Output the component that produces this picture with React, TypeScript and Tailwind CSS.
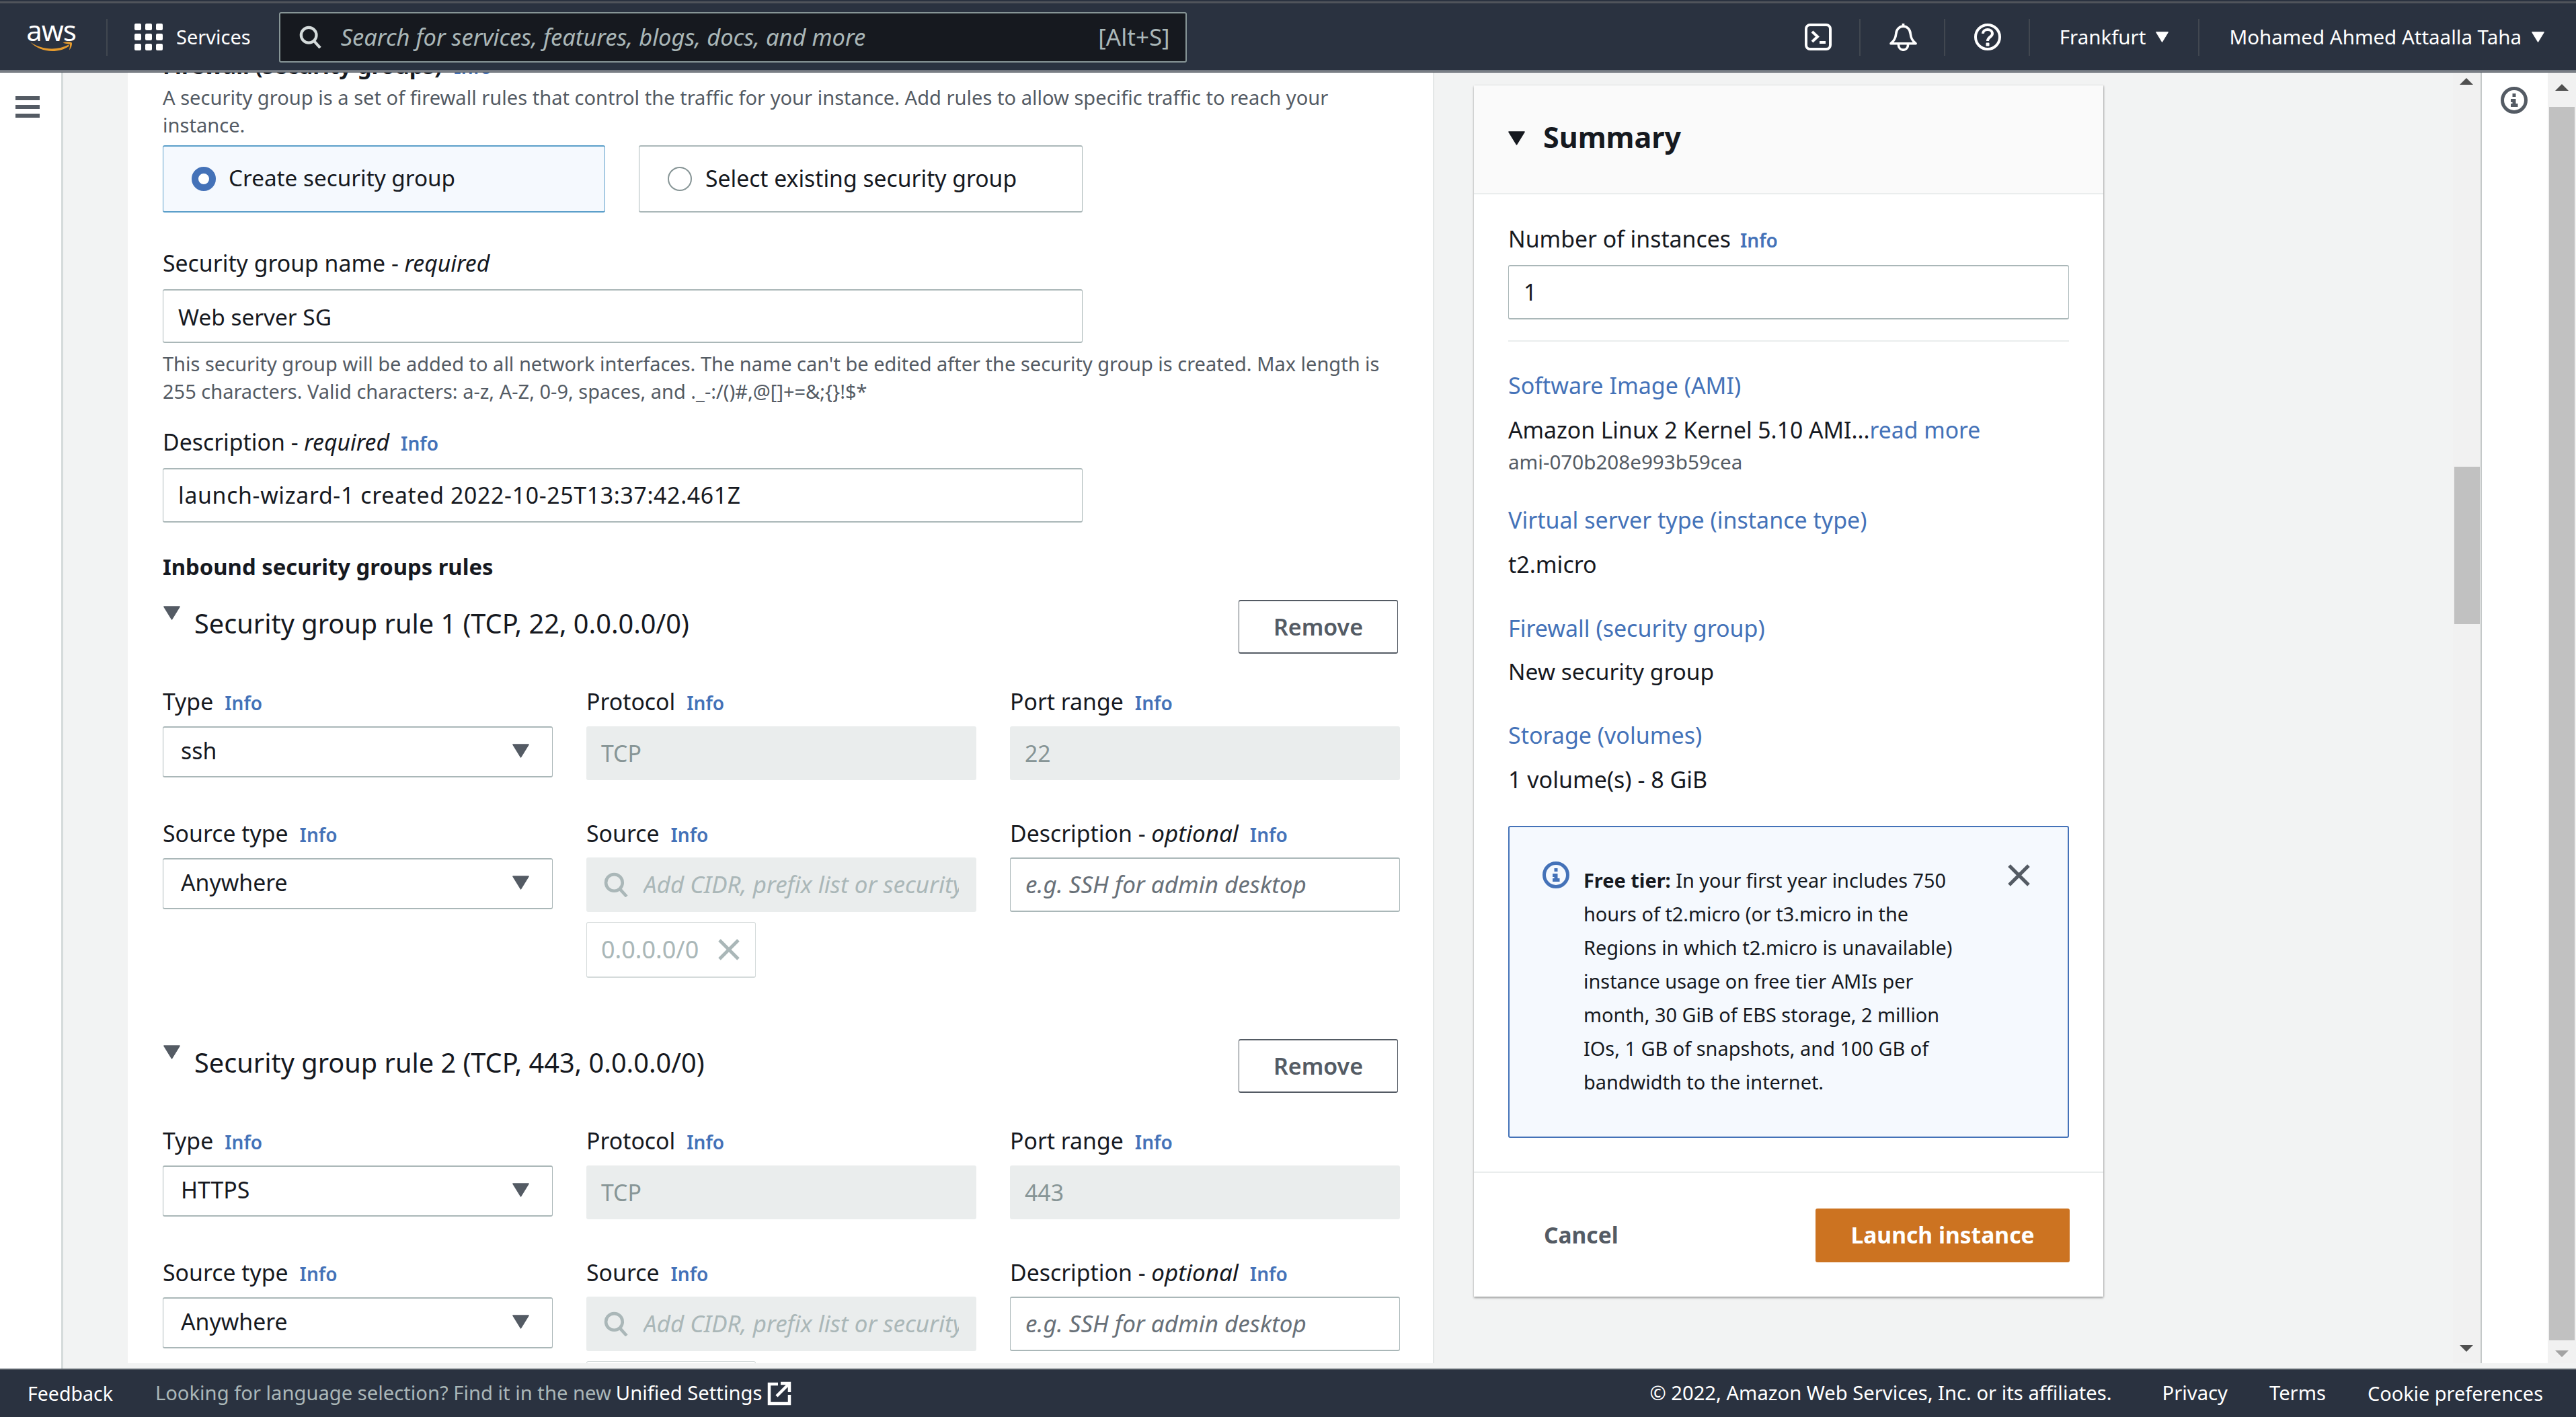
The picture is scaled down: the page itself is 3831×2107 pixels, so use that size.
import React from "react";

const FONT = "font-['Noto_Sans','Open_Sans',sans-serif]";

function Caret({ className = "" }: { className?: string }) {
  return (
    <svg viewBox="0 0 24 20" className={className} fill="currentColor">
      <path d="M1 1 H23 L12 19 Z" stroke="currentColor" strokeWidth="1.5" strokeLinejoin="round" />
    </svg>
  );
}

function Search({ className = "" }: { className?: string }) {
  return (
    <svg viewBox="0 0 36 36" className={className} fill="none" stroke="currentColor" strokeWidth="4.5">
      <circle cx="15" cy="15" r="12" />
      <path d="M23 24 L33 35" />
    </svg>
  );
}

function CloseX({ className = "" }: { className?: string }) {
  return (
    <svg viewBox="0 0 32 32" className={className} fill="none" stroke="currentColor" strokeWidth="5">
      <path d="M2 2 L30 30 M30 2 L2 30" />
    </svg>
  );
}

function InfoIcon({ className = "" }: { className?: string }) {
  return (
    <svg viewBox="0 0 40 40" className={className} fill="none">
      <circle cx="20" cy="20" r="17.5" stroke="currentColor" strokeWidth="5" />
      <path d="M17.5 10 h5 v5 h-5 Z M15 18 h7.5 v7 h3 v5 H15 v-5 h2.5 v-2 H15 Z" fill="currentColor" />
    </svg>
  );
}

function Info({ className = "ml-[17px]" }: { className?: string }) {
  return <span className={`text-[28px] font-semibold text-[#4472b8] ${className}`}>Info</span>;
}

function Label({ children }: { children: React.ReactNode }) {
  return <div className="h-[46px] leading-[46px] text-[33.8px] text-[#16191f] whitespace-nowrap">{children}</div>;
}

function Select({ value }: { value: string }) {
  return (
    <div className="mt-[14px] h-[76px] flex items-center pl-[26px] pr-[33px] bg-white rounded-[3px] border border-[#aab7b8] border-t-[2px] border-b-[2px] text-[33.8px] text-[#16191f]">
      <span className="-mt-[3px]">{value}</span>
      <Caret className="ml-auto w-[27px] h-[21px] text-[#545b64] -mt-[4px]" />
    </div>
  );
}

function DisabledInput({ value }: { value: string }) {
  return (
    <div className="mt-[14px] h-[80px] flex items-center pl-[22px] bg-[#eaeded] rounded-[3px] text-[33.8px] text-[#879596]">
      {value}
    </div>
  );
}

function DescInput() {
  return (
    <div className="mt-[13px] h-[81px] flex items-center pl-[22px] bg-white rounded-[3px] border border-[#aab7b8] border-t-[2px] border-b-[2px] text-[35px] italic text-[#687078] whitespace-nowrap overflow-hidden">
      e.g. SSH for admin desktop
    </div>
  );
}

function Rule({ title, type, port, mt, token }: { title: string; type: string; port: string; mt: string; token?: boolean }) {
  return (
    <section className={mt}>
      <div className="flex h-[80px]">
        <Caret className="w-[27px] h-[21px] mt-[9px] text-[#545b64]" />
        <div className="ml-[20px] mt-[12px] h-[46px] leading-[46px] text-[39.7px] text-[#16191f] whitespace-nowrap">{title}</div>
        <div className="ml-auto mr-[3px] w-[237px] h-[80px] flex items-center justify-center rounded-[3px] bg-white border border-[#545b64] border-t-[2px] border-b-[2px] text-[34px] font-semibold text-[#545b64]">
          Remove
        </div>
      </div>
      <div className="mt-[48px] grid grid-cols-[580px_580px_580px] gap-x-[50px]">
        <div>
          <Label>Type<Info /></Label>
          <Select value={type} />
        </div>
        <div>
          <Label>Protocol<Info /></Label>
          <DisabledInput value="TCP" />
        </div>
        <div>
          <Label>Port range<Info /></Label>
          <DisabledInput value={port} />
        </div>
      </div>
      <div className="mt-[56px] grid grid-cols-[580px_580px_580px] gap-x-[50px] items-start">
        <div>
          <Label>Source type<Info /></Label>
          <Select value="Anywhere" />
        </div>
        <div>
          <Label>Source<Info /></Label>
          <div className="mt-[13px] h-[81px] flex items-center pl-[26px] pr-[26px] bg-[#eaeded] rounded-[3px] text-[35px] italic text-[#aab7b8] whitespace-nowrap overflow-hidden">
            <Search className="w-[37px] h-[37px] mr-[22px] shrink-0" />
            <span className="min-w-0 overflow-hidden">Add CIDR, prefix list or security group</span>
          </div>
          <div className="mt-[15px] w-[252px] h-[83px] flex items-center pl-[21px] bg-white rounded-[3px] border border-[#d5dbdb] border-b-[2px] text-[36px] text-[#aab7b8]">
            {token && "0.0.0.0/0"}
            {token && <CloseX className="ml-[29px] w-[32px] h-[32px]" />}
          </div>
        </div>
        <div>
          <Label>Description - <i className="text-[35px]">optional</i><Info /></Label>
          <DescInput />
        </div>
      </div>
    </section>
  );
}

function SideLink({ children, mt }: { children: React.ReactNode; mt: string }) {
  return <div className={`${mt} h-[46px] leading-[46px] text-[34px] text-[#4472b8] whitespace-nowrap`}>{children}</div>;
}

function SideValue({ children, mt, size = "text-[34px]" }: { children: React.ReactNode; mt: string; size?: string }) {
  return <div className={`${mt} h-[46px] leading-[46px] ${size} text-[#16191f] whitespace-nowrap`}>{children}</div>;
}

function Divider() {
  return <div className="w-[2px] h-[55px] bg-[#414750]" />;
}

function Arrow({ up, className }: { up?: boolean; className: string }) {
  return (
    <svg viewBox="0 0 20 10" className={className} fill="currentColor">
      <path d={up ? "M10 0 L20 10 H0 Z" : "M0 0 H20 L10 10 Z"} />
    </svg>
  );
}

export default function App() {
  return (
    <div className={`${FONT} w-[3831px] h-[2107px] flex flex-col overflow-hidden bg-[#f2f3f3]`}>
      {/* Top navigation */}
      <header className="h-[108px] shrink-0 flex flex-col bg-[#2a3240] text-white">
        <div className="h-[2px] bg-[#2a3240]" />
        <div className="h-[3px] bg-[#50545b]" />
        <div className="flex-1 min-h-0 flex items-center">
          <div className="ml-[36px] w-[80px] h-[52px] flex flex-col items-center -mt-[2px]">
            <span className="text-[42px] leading-[34px] tracking-[-1px] text-white">aws</span>
            <svg viewBox="0 0 80 24" className="w-[78px] h-[22px] -mt-[1px] text-[#e59b2e]" fill="currentColor">
              <path d="M1 2 C20 16 50 19 73 7 L74 9.5 C52 25 18 21 1 2 Z" />
              <path d="M62 3 C68 1 76 1 79 3 C80 8 77 14 74 17 C75 12 76 8 75 6 C72 5 67 5 62 3 Z" />
            </svg>
          </div>
          <div className="ml-[42px] w-[2px] h-[55px] bg-[#414750]" />
          <svg viewBox="0 0 42 40" className="ml-[40px] w-[42px] h-[40px]" fill="currentColor">
            {[0, 15, 30].map((y) =>
              [0, 16, 32].map((x) => <rect key={`${x}-${y}`} x={x} y={y} width="10" height="10" rx="2" />),
            )}
          </svg>
          <span className="ml-[20px] text-[29px]">Services</span>
          <div className="ml-[42px] w-[1350px] h-[75px] flex items-center bg-[#16191f] rounded-[3px] border-2 border-[#879596] pl-[28px] pr-[23px]">
            <Search className="w-[34px] h-[34px] text-[#d5dbdb]" />
            <span className="ml-[28px] text-[34.5px] italic text-[#aab7b8] whitespace-nowrap">Search for services, features, blogs, docs, and more</span>
            <span className="ml-auto text-[35px] text-[#aab7b8]">[Alt+S]</span>
          </div>
          <div className="ml-auto flex items-center mr-[46px]">
            <svg viewBox="0 0 40 40" className="w-[40px] h-[40px]" fill="none" stroke="currentColor" strokeWidth="4">
              <rect x="2" y="2" width="36" height="36" rx="6" />
              <path d="M11 12 L19 19.5 L11 27 M22 28 H31" />
            </svg>
            <div className="ml-[41px]"><Divider /></div>
            <svg viewBox="0 0 40 40" className="ml-[43px] w-[41px] h-[41px]" fill="none" stroke="currentColor" strokeWidth="3.6">
              <path d="M20 0 V4 M2 29 C8 24 9 20 9.5 15 C10 8 15 4 20 4 C25 4 30 8 30.5 15 C31 20 32 24 38 29 Z M13 30 C13 41 27 41 27 30" strokeLinejoin="round" />
            </svg>
            <div className="ml-[40px]"><Divider /></div>
            <svg viewBox="0 0 40 40" className="ml-[43px] w-[40px] h-[40px]" fill="none" stroke="currentColor" strokeWidth="4">
              <circle cx="20" cy="20" r="18" />
              <path d="M13 15 C13 7 27 7 27 15 C27 20 20 20 20 26" />
              <path d="M18 29 h4 v4 h-4 Z" fill="currentColor" strokeWidth="1" />
            </svg>
            <div className="ml-[41px]"><Divider /></div>
            <span className="ml-[44px] text-[29.5px] whitespace-nowrap">Frankfurt</span>
            <Caret className="ml-[14px] w-[21px] h-[16px]" />
            <div className="ml-[43px]"><Divider /></div>
            <span className="ml-[44px] text-[29.5px] whitespace-nowrap">Mohamed Ahmed Attaalla Taha</span>
            <Caret className="ml-[14px] w-[21px] h-[16px]" />
          </div>
        </div>
        <div className="h-[1px] bg-white" />
        <div className="h-[2px] bg-[#5b616a]" />
      </header>

      {/* Body */}
      <div className="flex-1 min-h-0 flex">
        <aside className="w-[94px] shrink-0 bg-white border-r-[3px] border-[#d5dbdb] pt-[35px] pl-[23px]">
          <div className="w-[36px] flex flex-col gap-[7px]">
            <div className="h-[6px] bg-[#545b64]" />
            <div className="h-[6px] bg-[#545b64]" />
            <div className="h-[6px] bg-[#545b64]" />
          </div>
        </aside>

        <div className="w-[96px] shrink-0" />

        <main className="w-[1943px] h-[1919px] shrink-0 bg-white overflow-hidden border-r-[2px] border-[#e4e7e7] pl-[52px]">
          <div className="-mt-[35px] w-[1840px]">
            <div className="h-[50px] leading-[50px] text-[33px] font-bold text-[#16191f]">
              Firewall (security groups)<Info className="ml-[18px]" />
            </div>
            <p className="mt-[2px] w-[1800px] text-[29.1px] leading-[41px] text-[#545b64]">
              A security group is a set of firewall rules that control the traffic for your instance. Add rules to allow specific traffic to reach your<br />instance.
            </p>
            <div className="mt-[9px] flex gap-[50px]">
              <div className="w-[658px] h-[100px] flex items-center pl-[42px] rounded-[3px] bg-[#f5f9fe] border border-[#5a9ec9] border-t-[2px] border-b-[2px] text-[33.3px] text-[#16191f]">
                <span className="w-[36px] h-[36px] rounded-full border-[10px] border-[#4472b8] bg-white shrink-0" />
                <span className="ml-[19px] -mt-[2px]">Create security group</span>
              </div>
              <div className="w-[660px] h-[100px] flex items-center pl-[42px] rounded-[3px] bg-white border border-[#aab7b8] border-t-[2px] border-b-[2px] text-[33.7px] text-[#16191f]">
                <span className="w-[36px] h-[36px] rounded-full border-[2px] border-[#879596] bg-white shrink-0" />
                <span className="ml-[20px] -mt-[2px]">Select existing security group</span>
              </div>
            </div>

            <div className="mt-[52px]"><Label>Security group name - <i>required</i></Label></div>
            <div className="mt-[16px] w-[1368px] h-[80px] flex items-center pl-[22px] rounded-[3px] bg-white border border-[#aab7b8] border-t-[2px] border-b-[2px] text-[33.4px] text-[#16191f]">
              <span className="mt-[3px]">Web server SG</span>
            </div>
            <p className="mt-[10px] w-[1820px] text-[29px] leading-[41px] text-[#545b64]">
              This security group will be added to all network interfaces. The name can't be edited after the security group is created. Max length is<br />255 characters. Valid characters: a-z, A-Z, 0-9, spaces, and ._-:/()#,@[]+=&amp;;{"{}"}!$*
            </p>

            <div className="mt-[32px]"><Label>Description - <i>required</i><Info /></Label></div>
            <div className="mt-[16px] w-[1368px] h-[81px] flex items-center pl-[22px] rounded-[3px] bg-white border border-[#aab7b8] border-t-[2px] border-b-[2px] text-[33.8px] tracking-[0.67px] text-[#16191f]">
              launch-wizard-1 created 2022-10-25T13:37:42.461Z
            </div>

            <div className="mt-[43px] h-[46px] leading-[46px] text-[32.8px] font-bold text-[#16191f]">Inbound security groups rules</div>

            <Rule mt="mt-[26px]" token title="Security group rule 1 (TCP, 22, 0.0.0.0/0)" type="ssh" port="22" />
            <Rule mt="mt-[91px]" title="Security group rule 2 (TCP, 443, 0.0.0.0/0)" type="HTTPS" port="443" />
          </div>
        </main>

        <div className="w-[59px] shrink-0" />

        {/* Summary card */}
        <div className="w-[936px] h-[1801px] mt-[19px] shrink-0 bg-white shadow-[0_2px_3px_rgba(0,0,0,0.35),1px_0_2px_rgba(0,0,0,0.15)]">
          <div className="h-[162px] bg-[#fafafa] border-b-[2px] border-[#eaeded] flex items-center pl-[50px]">
            <Caret className="w-[27px] h-[21px] text-[#16191f] -mt-[4px]" />
            <span className="ml-[26px] text-[43px] font-bold text-[#16191f] -mt-[6px]">Summary</span>
          </div>
          <div className="px-[51px]">
            <div className="pt-[43px]"><Label>Number of instances<Info className="ml-[14px]" /></Label></div>
            <div className="mt-[16px] h-[81px] flex items-center pl-[22px] rounded-[3px] bg-white border border-[#aab7b8] border-t-[2px] border-b-[2px] text-[33.8px] text-[#16191f]">1</div>
            <div className="mt-[31px] h-[2px] bg-[#eaeded]" />
            <SideLink mt="mt-[42px]">Software Image (AMI)</SideLink>
            <SideValue mt="mt-[20px]" size="text-[33.7px]">Amazon Linux 2 Kernel 5.10 AMI...<span className="text-[#4472b8]">read more</span></SideValue>
            <div className="mt-[7px] h-[36px] leading-[36px] text-[29.6px] text-[#545b64]">ami-070b208e993b59cea</div>
            <SideLink mt="mt-[45px]">Virtual server type (instance type)</SideLink>
            <SideValue mt="mt-[20px]">t2.micro</SideValue>
            <SideLink mt="mt-[49px]">Firewall (security group)</SideLink>
            <SideValue mt="mt-[18px]" size="text-[33.5px]">New security group</SideValue>
            <SideLink mt="mt-[49px]">Storage (volumes)</SideLink>
            <SideValue mt="mt-[20px]">1 volume(s) - 8 GiB</SideValue>
            <div className="relative mt-[46px] h-[464px] bg-[#f5f9fe] rounded-[3px] border-[2px] border-[#4472b8] pt-[54px] pl-[110px]">
              <InfoIcon className="absolute left-[49px] top-[51px] w-[40px] h-[40px] text-[#4472b8]" />
              <CloseX className="absolute left-[741px] top-[55px] w-[33px] h-[33px] text-[#545b64]" />
              <p className="text-[28.9px] leading-[50px] text-[#16191f] whitespace-nowrap">
                <b className="font-bold">Free tier:</b> In your first year includes 750<br />
                hours of t2.micro (or t3.micro in the<br />
                Regions in which t2.micro is unavailable)<br />
                instance usage on free tier AMIs per<br />
                month, 30 GiB of EBS storage, 2 million<br />
                IOs, 1 GB of snapshots, and 100 GB of<br />
                bandwidth to the internet.
              </p>
            </div>
          </div>
          <div className="mt-[50px] h-[2px] bg-[#eaeded]" />
          <div className="mt-[53px] pl-[104px] pr-[50px] flex items-center">
            <span className="text-[33.5px] font-bold text-[#545b64] -mt-[2px]">Cancel</span>
            <div className="ml-auto w-[378px] h-[80px] flex items-center justify-center rounded-[3px] bg-[#cc7321] text-[33.6px] font-bold text-white">
              <span className="-mt-[2px]">Launch instance</span>
            </div>
          </div>
        </div>

        <div className="flex-1" />

        {/* Inner scrollbar */}
        <div className="w-[41px] h-[1919px] shrink-0 bg-[#f1f1f1] relative">
          <Arrow up className="absolute top-[8px] left-[10px] w-[20px] h-[10px] text-[#505050]" />
          <div className="absolute top-[586px] left-[2px] w-[38px] h-[234px] bg-[#c1c1c1]" />
          <Arrow className="absolute top-[1892px] left-[10px] w-[20px] h-[10px] text-[#505050]" />
        </div>

        {/* Tools panel */}
        <div className="w-[100px] h-[1919px] shrink-0 bg-white border-l-[2px] border-[#c4c8c8] pt-[21px] pl-[28px]">
          <InfoIcon className="w-[40px] h-[40px] text-[#545b64]" />
        </div>

        {/* Page scrollbar */}
        <div className="w-[42px] h-[1919px] shrink-0 bg-[#f1f1f1] relative">
          <Arrow up className="absolute top-[17px] left-[11px] w-[20px] h-[10px] text-[#505050]" />
          <div className="absolute top-[51px] left-[2px] w-[38px] h-[1834px] bg-[#c1c1c1]" />
          <Arrow className="absolute top-[1900px] left-[11px] w-[20px] h-[10px] text-[#a3a3a3]" />
        </div>
      </div>

      {/* Footer */}
      <footer className="h-[72px] shrink-0 bg-[#2a3240] border-t-[2px] border-[#545b64] flex items-center text-[29.2px] whitespace-nowrap">
        <span className="ml-[41px] text-[28.5px] text-white">Feedback</span>
        <span className="ml-[63px] text-[#aab7b8]">Looking for language selection? Find it in the new</span>
        <span className="ml-[7px] text-white">Unified Settings</span>
        <svg viewBox="0 0 36 36" className="ml-[8px] w-[36px] h-[36px] text-white" fill="none" stroke="currentColor" strokeWidth="4.5">
          <path d="M16 4 H3 V33 H33 V20 M14 22 L32 4 M20 3 H33 V16" />
        </svg>
        <span className="ml-auto text-white">© 2022, Amazon Web Services, Inc. or its affiliates.</span>
        <span className="ml-[75px] text-white">Privacy</span>
        <span className="ml-[62px] text-white">Terms</span>
        <span className="ml-[62px] mr-[49px] text-[28.9px] text-white">Cookie preferences</span>
      </footer>
    </div>
  );
}
